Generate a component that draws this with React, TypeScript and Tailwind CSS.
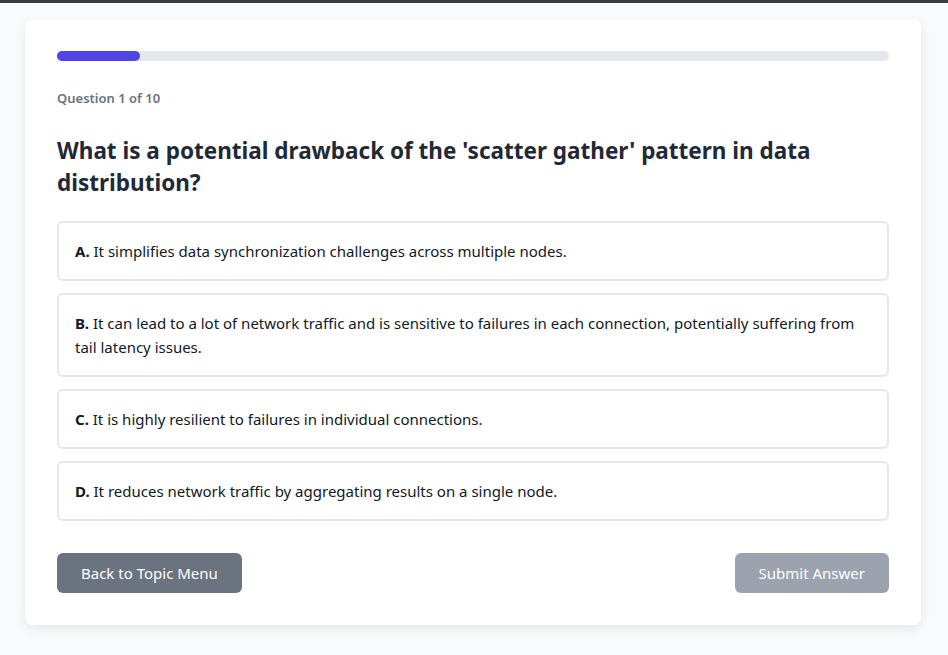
import React from "react";

const options = [
  { key: "A", text: "It simplifies data synchronization challenges across multiple nodes." },
  {
    key: "B",
    text: "It can lead to a lot of network traffic and is sensitive to failures in each connection, potentially suffering from tail latency issues.",
  },
  { key: "C", text: "It is highly resilient to failures in individual connections." },
  { key: "D", text: "It reduces network traffic by aggregating results on a single node." },
];

export default function App() {
  return (
    <div
      className="min-h-screen bg-[#f9fafb]"
      style={{ fontFamily: '"Noto Sans", "Open Sans", sans-serif' }}
    >
      <div className="h-[3px] bg-[#3a3a3a]" />
      <div className="pt-4">
        <div className="ml-[25px] w-[896px] rounded-lg bg-white p-8 shadow-[0_4px_12px_rgba(0,0,0,0.08)]">
          <div className="h-2.5 w-full rounded-full bg-[#e5e7eb]">
            <div className="h-2.5 w-[10%] rounded-full bg-[#4f46e5]" />
          </div>
          <div className="mt-[27px] text-[13px] font-semibold leading-5 text-[#6b7280]">
            Question 1 of 10
          </div>
          <h1 className="mt-[27px] text-[22.5px] font-bold leading-8 text-[#1f2937]">
            What is a potential drawback of the 'scatter gather' pattern in data distribution?
          </h1>
          <div className="mt-[22px] flex flex-col gap-3">
            {options.map((o) => (
              <div
                key={o.key}
                className="rounded-md border-2 border-[#e5e7eb] bg-white px-4 py-4 text-[15px] leading-6 text-[#111827]"
              >
                <span className="font-bold">{o.key}.</span> {o.text}
              </div>
            ))}
          </div>
          <div className="mt-8 flex items-center justify-between">
            <button className="h-10 rounded-md bg-[#6b7280] px-6 text-[15px] text-white">
              Back to Topic Menu
            </button>
            <button className="h-10 rounded-md bg-[#9ca3af] px-6 text-[15px] text-white">
              Submit Answer
            </button>
          </div>
        </div>
      </div>
    </div>
  );
}
